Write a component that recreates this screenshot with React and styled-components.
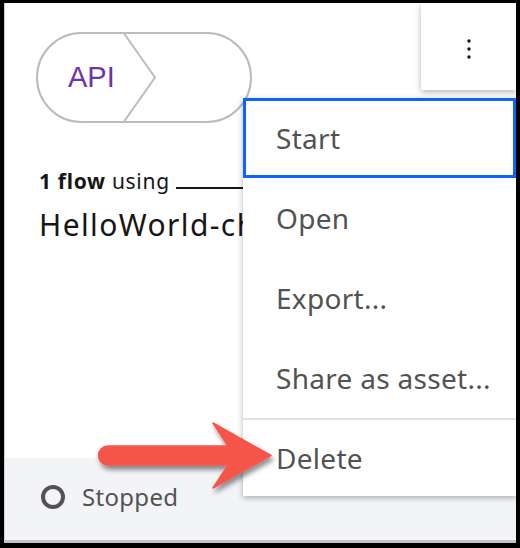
import React from "react";
import styled, { createGlobalStyle } from "styled-components";

const GlobalStyle = createGlobalStyle`
  html, body {
    margin: 0;
    padding: 0;
    background: #000;
  }
  body {
    font-family: "Noto Sans", "Open Sans", sans-serif;
  }
`;

const Frame = styled.div`
  width: 520px;
  height: 548px;
  box-sizing: border-box;
  padding: 3px 4px 5px 4px;
  background: #000;
`;

const Card = styled.div`
  position: relative;
  width: 512px;
  height: 540px;
  box-sizing: border-box;
  background: #fff;
  border-left: 1px solid #d0d0d0;
  border-bottom: 3px solid #c4c4c4;
  display: flex;
  flex-direction: column;
  overflow: hidden;
`;

const Header = styled.div`
  display: flex;
  justify-content: space-between;
  align-items: flex-start;
`;

const Pill = styled.div`
  margin: 29px 0 0 31px;
  width: 216px;
  height: 91px;
  box-sizing: border-box;
  border: 2px solid #bcbcbc;
  border-radius: 46px;
  display: flex;
  align-items: center;
  padding-left: 30px;
`;

const PillLabel = styled.span`
  font-family: "Liberation Sans", Arial, sans-serif;
  font-size: 29px;
  color: #6e35a6;
  width: 54px;
`;

const Chevron = styled.svg`
  align-self: stretch;
  margin: -2px 0;
  width: 34px;
  height: 91px;
`;

const KebabButton = styled.button`
  width: 95px;
  height: 87px;
  border: none;
  background: #fff;
  box-shadow: 0 2px 6px rgba(0, 0, 0, 0.3);
  display: flex;
  justify-content: center;
  padding: 36px 0 0 0;
  align-items: flex-start;
`;

const Body = styled.div`
  padding: 46px 0 0 34px;
  color: #161616;
`;

const Usage = styled.div`
  font-size: 21px;
  line-height: 24px;
  letter-spacing: 0.7px;
  b {
    font-weight: 700;
  }
`;

const Blank = styled.span`
  display: inline-block;
  width: 90px;
  margin-left: 6px;
  border-bottom: 2px solid #161616;
`;

const FlowName = styled.div`
  margin-top: 13px;
  width: 204px;
  overflow: hidden;
  font-size: 30px;
  line-height: 38px;
  letter-spacing: 1.4px;
  white-space: nowrap;
`;

const Footer = styled.div`
  margin-top: auto;
  height: 82px;
  box-sizing: border-box;
  padding: 0 0 5px 36px;
  background: #f2f4f8;
  display: flex;
  align-items: center;
  gap: 17px;
  color: #525252;
  font-size: 24px;
  letter-spacing: 0.3px;
`;

const StatusRing = styled.span`
  width: 24px;
  height: 24px;
  box-sizing: border-box;
  border: 4px solid #525252;
  border-radius: 50%;
`;

const Menu = styled.ul`
  position: absolute;
  top: 95px;
  right: 0;
  width: 273px;
  margin: 0;
  padding: 0;
  list-style: none;
  background: #fff;
  box-shadow: 0 2px 6px rgba(0, 0, 0, 0.3);
  z-index: 2;
`;

const MenuItem = styled.li`
  height: ${(p) => (p.$last ? 78 : 80)}px;
  box-sizing: border-box;
  display: flex;
  align-items: center;
  padding-left: 33px;
  font-size: 28px;
  letter-spacing: 0.3px;
  color: #525252;
  outline: ${(p) => (p.$focused ? "3px solid #0f62fe" : "none")};
  outline-offset: -3px;
  border-top: ${(p) => (p.$divider ? "2px solid #e0e0e0" : "none")};
`;

const Arrow = styled.svg`
  position: absolute;
  left: 86px;
  top: 412px;
  z-index: 3;
`;

const items = ["Start", "Open", "Export...", "Share as asset...", "Delete"];

export default function App() {
  return (
    <Frame>
      <GlobalStyle />
      <Card>
        <Header>
          <Pill>
            <PillLabel>API</PillLabel>
            <Chevron viewBox="0 0 34 91">
              <polyline
                points="1,0 33,45.5 1,91"
                fill="none"
                stroke="#bcbcbc"
                strokeWidth="2"
              />
            </Chevron>
          </Pill>
          <KebabButton aria-label="Options">
            <svg width="4" height="20" viewBox="0 0 4 20">
              <circle cx="2" cy="2" r="1.7" fill="#161616" />
              <circle cx="2" cy="10" r="1.7" fill="#161616" />
              <circle cx="2" cy="18" r="1.7" fill="#161616" />
            </svg>
          </KebabButton>
        </Header>
        <Body>
          <Usage>
            <b>1 flow</b> using<Blank />
          </Usage>
          <FlowName>HelloWorld-chat</FlowName>
        </Body>
        <Footer>
          <StatusRing />
          Stopped
        </Footer>
        <Menu>
          {items.map((label, i) => (
            <MenuItem
              key={label}
              $focused={i === 0}
              $divider={label === "Delete"}
              $last={label === "Delete"}
            >
              {label}
            </MenuItem>
          ))}
        </Menu>
        <Arrow width="200" height="100" viewBox="0 0 200 100">
          <defs>
            <filter id="arrowShadow" x="-10%" y="-20%" width="130%" height="160%">
              <feDropShadow dx="2" dy="4" stdDeviation="2.5" floodColor="#000" floodOpacity="0.45" />
            </filter>
          </defs>
          <path
            d="M17 31 L137 31 L122 8 L180 40.5 L122 73 L137 50 L17 50 A9.5 9.5 0 0 1 17 31 Z"
            fill="#f6564a"
            stroke="#f6564a"
            strokeWidth="1.5"
            strokeLinejoin="round"
            filter="url(#arrowShadow)"
          />
        </Arrow>
      </Card>
    </Frame>
  );
}
